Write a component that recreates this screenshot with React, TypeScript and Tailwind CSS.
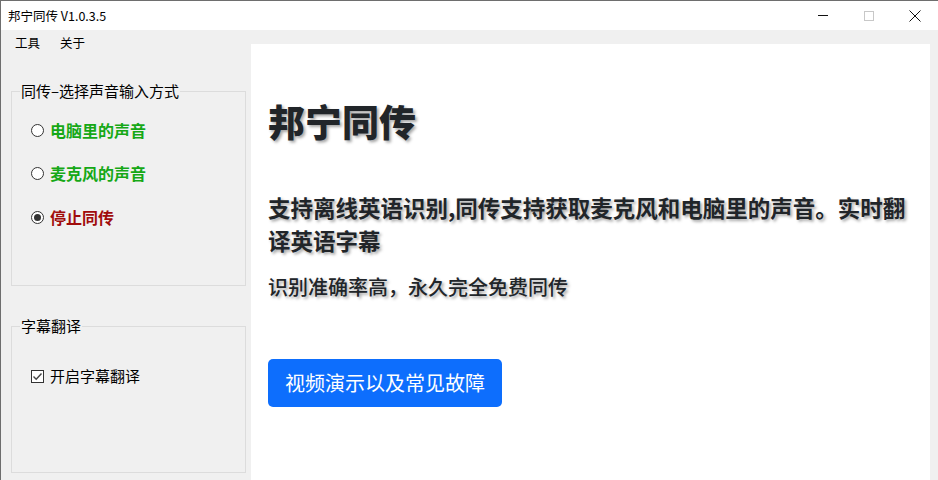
import React from "react";

const font = { fontFamily: '"Noto Sans CJK SC", "Noto Sans", sans-serif' };

function Radio({ checked, label, color }: { checked?: boolean; label: string; color: string }) {
  return (
    <div className="flex items-center h-[20px]">
      <span className="w-[13px] h-[13px] rounded-full border border-[#333] bg-white flex items-center justify-center">
        {checked && <span className="w-[7px] h-[7px] rounded-full bg-[#333]" />}
      </span>
      <span className={`ml-[6px] text-[16px] leading-[20px] font-bold ${color}`}>{label}</span>
    </div>
  );
}

export default function App() {
  return (
    <div style={font} className="w-[938px] h-[480px] overflow-hidden bg-[#f0f0f0] border-l border-[#6e6e6e] flex flex-col text-[#000]">
      {/* title bar */}
      <div className="h-[30px] bg-white border-t border-[#6e6e6e] flex items-center shrink-0">
        <span className="ml-[7px] text-[12.5px] leading-[16px]">邦宁同传 V1.0.3.5</span>
        <div className="ml-auto flex items-center h-full">
          <div className="w-[46px] h-full flex items-center justify-center">
            <span className="block w-[10px] h-px bg-[#111]" />
          </div>
          <div className="w-[46px] h-full flex items-center justify-center">
            <span className="block w-[10px] h-[10px] border border-[#c8c8c8]" />
          </div>
          <div className="w-[46px] h-full flex items-center justify-center">
            <svg width="12" height="12" viewBox="0 0 12 12">
              <path d="M0.5 0.5 L11.5 11.5 M11.5 0.5 L0.5 11.5" stroke="#111" strokeWidth="1" />
            </svg>
          </div>
        </div>
      </div>
      <div className="flex flex-1 min-h-0">
        {/* left column */}
        <div className="w-[250px] shrink-0 flex flex-col">
          <div className="h-[26px] flex items-center text-[12.5px] leading-[16px]">
            <span className="ml-[14px]">工具</span>
            <span className="ml-[20px]">关于</span>
          </div>
          <fieldset className="mt-[25px] ml-[10px] w-[235px] h-[205px] border border-[#dcdcdc] pl-[19px]">
            <legend className="ml-[-11px] px-[1px] text-[15px] leading-[20px]">同传–选择声音输入方式</legend>
            <div className="pt-[19px] flex flex-col">
              <Radio label="电脑里的声音" color="text-[#16a816]" />
              <div className="mt-[23px]">
                <Radio label="麦克风的声音" color="text-[#16a816]" />
              </div>
              <div className="mt-[24px]">
                <Radio checked label="停止同传" color="text-[#a00c0c]" />
              </div>
            </div>
          </fieldset>
          <fieldset className="mt-[30px] ml-[10px] w-[235px] h-[157px] border border-[#dcdcdc] pl-[19px]">
            <legend className="ml-[-11px] px-[1px] text-[15px] leading-[20px]">字幕翻译</legend>
            <div className="pt-[30px] flex items-center h-[50px]">
              <span className="w-[13px] h-[13px] border border-[#333] bg-white flex items-center justify-center">
                <svg width="11" height="11" viewBox="0 0 11 11">
                  <path d="M1.5 5.5 L4.2 8.2 L9.5 2.5" stroke="#444" strokeWidth="1.4" fill="none" />
                </svg>
              </span>
              <span className="ml-[6px] text-[15px] leading-[20px]">开启字幕翻译</span>
            </div>
          </fieldset>
        </div>
        {/* right panel */}
        <div className="flex-1 pt-[14px] pr-[8px]">
          <div className="h-full bg-white pl-[17px] pt-[55px] text-[#212529] [text-shadow:2px_2px_3px_rgba(0,0,0,0.35)]">
            <div className="text-[37px] leading-[44px] font-black">邦宁同传</div>
            <div className="mt-[48px] w-[650px] text-[22.5px] leading-[33px] font-bold">
              支持离线英语识别,同传支持获取麦克风和电脑里的声音。实时翻译英语字幕
            </div>
            <div className="mt-[15px] text-[20px] leading-[30px] font-medium">识别准确率高，永久完全免费同传</div>
            <div className="mt-[57px]">
              <button className="h-[48px] px-[17px] rounded-[5px] bg-[#0d6efd] text-white text-[20px] leading-[48px] [text-shadow:none]">
                视频演示以及常见故障
              </button>
            </div>
          </div>
        </div>
      </div>
    </div>
  );
}
